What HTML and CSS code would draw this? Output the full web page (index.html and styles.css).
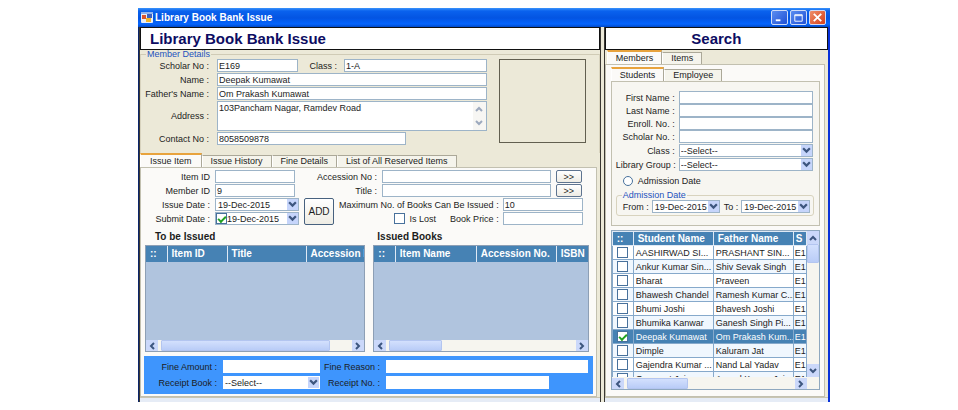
FILE: index.html
```html
<!DOCTYPE html>
<html lang="en">
<head>
<meta charset="utf-8">
<title>Library Book Bank Issue</title>
<link rel="stylesheet" href="styles.css">
</head>
<body>
<svg width="0" height="0" class="defs" aria-hidden="true">
  <symbol id="down" viewBox="0 0 8 6"><path d="M1 1l3 3 3-3" fill="none" stroke="#3d567f" stroke-width="2"/></symbol>
  <symbol id="up" viewBox="0 0 8 6"><path d="M1 5l3-3 3 3" fill="none" stroke="#3d567f" stroke-width="2"/></symbol>
  <symbol id="left" viewBox="0 0 6 8"><path d="M5 1L2 4l3 3" fill="none" stroke="#3d567f" stroke-width="2"/></symbol>
  <symbol id="right" viewBox="0 0 6 8"><path d="M1 1l3 3-3 3" fill="none" stroke="#3d567f" stroke-width="2"/></symbol>
</svg>
<div class="window">
  <header class="titlebar">
    <svg class="app-icon" viewBox="0 0 12 11"><rect width="12" height="11" rx="1" fill="#e9edf6"/><path d="M0 0h12v2H0z" fill="#8fb2ee"/><path d="M1 3h4v4H1z" fill="#d9552e"/><path d="M6 2h5v4H6z" fill="#3a62c4"/><path d="M5 6h5v4H5z" fill="#f2b62b"/></svg>
    <span class="caption">Library Book Bank Issue</span>
    <button class="win-btn" aria-label="Minimize"><svg viewBox="0 0 16 14"><path d="M4 10h5" stroke="#fff" stroke-width="2"/></svg></button>
    <button class="win-btn" aria-label="Maximize"><svg viewBox="0 0 16 14"><path d="M4 4h8v7H4zM4 5h8" fill="none" stroke="#fff"/></svg></button>
    <button class="win-btn close" aria-label="Close"><svg viewBox="0 0 16 14"><path d="M4 3l8 8M12 3l-8 8" stroke="#fff" stroke-width="2"/></svg></button>
  </header>
  <div class="columns">
    <main class="pane issue">
      <h1>Library Book Bank Issue</h1>
      <fieldset class="member">
        <legend>Member Details</legend>
        <div class="member-body">
          <div class="member-form">
            <label for="scholar">Scholar No :</label>
            <div class="pair"><input id="scholar" value="E169"><label for="class">Class :</label><input id="class" value="1-A"></div>
            <label for="name">Name :</label><input id="name" value="Deepak Kumawat">
            <label for="father">Father's Name :</label><input id="father" value="Om Prakash Kumawat">
            <label for="address">Address :</label>
            <div class="area"><textarea id="address">103Pancham Nagar, Ramdev Road</textarea><span class="spin"><svg viewBox="0 0 8 6"><use href="#up"/></svg><svg viewBox="0 0 8 6"><use href="#down"/></svg></span></div>
            <label for="contact">Contact No :</label><input id="contact" class="short" value="8058509878">
          </div>
          <div class="photo"></div>
        </div>
      </fieldset>
      <nav class="tabs main-tabs">
        <button class="tab active">Issue Item</button><button class="tab">Issue History</button><button class="tab">Fine Details</button><button class="tab">List of All Reserved Items</button>
      </nav>
      <section class="sheet issue-sheet">
        <div class="upper">
          <label for="item">Item ID</label><input id="item">
          <label for="acc">Accession No :</label><input id="acc" class="wide"><button class="go">&gt;&gt;</button>
          <label for="mid">Member ID</label><input id="mid" value="9">
          <label for="title">Title :</label><input id="title" class="wide"><button class="go">&gt;&gt;</button>
        </div>
        <div class="lower">
          <div class="dates">
            <label for="idate">Issue Date :</label>
            <span class="combo"><input id="idate" value="19-Dec-2015"><button aria-label="Pick issue date"><svg><use href="#down"/></svg></button></span>
            <label for="sdate">Submit Date :</label>
            <span class="combo"><input type="checkbox" checked aria-label="Use submit date"><input id="sdate" value="19-Dec-2015"><button aria-label="Pick submit date"><svg><use href="#down"/></svg></button></span>
          </div>
          <button class="add">ADD</button>
          <div class="limits">
            <label for="max">Maximum No. of Books Can Be Issued :</label><input id="max" value="10">
            <div class="lost"><input type="checkbox" id="lost"><label for="lost">Is Lost</label><label for="price">Book Price :</label></div><input id="price">
          </div>
        </div>
        <div class="lists">
          <section>
            <h2>To be Issued</h2>
            <div class="list">
              <table class="pending"><thead><tr><th class="mark">::</th><th class="c1">Item ID</th><th class="c2">Title</th><th>Accession N</th></tr></thead></table>
              <div class="hscroll"><button aria-label="Scroll left"><svg><use href="#left"/></svg></button><span class="track"><i class="thumb long"></i></span><button aria-label="Scroll right"><svg><use href="#right"/></svg></button></div>
            </div>
          </section>
          <section>
            <h2>Issued Books</h2>
            <div class="list">
              <table class="issued"><thead><tr><th class="mark">::</th><th class="c1">Item Name</th><th class="c2">Accession No.</th><th>ISBN</th></tr></thead></table>
              <div class="hscroll"><button aria-label="Scroll left"><svg><use href="#left"/></svg></button><span class="track"><i class="thumb"></i></span><button aria-label="Scroll right"><svg><use href="#right"/></svg></button></div>
            </div>
          </section>
        </div>
        <div class="fine">
          <label for="amount">Fine Amount :</label><input id="amount">
          <label for="reason">Fine Reason :</label><input id="reason">
          <label for="book">Receipt Book :</label>
          <span class="combo"><select id="book"><option>--Select--</option></select><svg class="arrow"><use href="#down"/></svg></span>
          <label for="receipt">Receipt No. :</label><input id="receipt" class="receipt">
        </div>
      </section>
      <div class="strip"></div>
    </main>
    <aside class="pane search">
      <h1>Search</h1>
      <nav class="tabs"><button class="tab active">Members</button><button class="tab">Items</button></nav>
      <section class="sheet search-sheet">
        <nav class="tabs"><button class="tab active">Students</button><button class="tab">Employee</button></nav>
        <div class="sheet students">
          <div class="filters">
            <label for="fn">First Name :</label><input id="fn">
            <label for="ln">Last Name :</label><input id="ln">
            <label for="en">Enroll. No. :</label><input id="en">
            <label for="sn">Scholar No. :</label><input id="sn">
          </div>
          <div class="filters picks">
            <label for="cl">Class :</label><span class="combo"><select id="cl"><option>--Select--</option></select><svg class="arrow"><use href="#down"/></svg></span>
            <label for="lg">Library Group :</label><span class="combo"><select id="lg"><option>--Select--</option></select><svg class="arrow"><use href="#down"/></svg></span>
          </div>
          <div class="by-date"><input type="radio" id="ad"><label for="ad">Admission Date</label></div>
          <fieldset class="range">
            <legend>Admission Date</legend>
            <div class="range-row">
              <label for="from">From :</label><span class="combo"><input id="from" value="19-Dec-2015"><button aria-label="Pick start date"><svg><use href="#down"/></svg></button></span>
              <label for="to">To :</label><span class="combo"><input id="to" value="19-Dec-2015"><button aria-label="Pick end date"><svg><use href="#down"/></svg></button></span>
            </div>
          </fieldset>
        </div>
        <div class="results">
          <div class="clip">
            <table class="people">
              <thead><tr><th class="mark">::</th><th class="c1">Student Name</th><th class="c2">Father Name</th><th class="c3">S</th></tr></thead>
              <tbody>
                <tr><td><input type="checkbox" aria-label="Select"></td><td>AASHIRWAD SI...</td><td>PRASHANT SIN...</td><td>E1</td></tr>
                <tr><td><input type="checkbox" aria-label="Select"></td><td>Ankur Kumar Sin...</td><td>Shiv Sevak Singh</td><td>E1</td></tr>
                <tr><td><input type="checkbox" aria-label="Select"></td><td>Bharat</td><td>Praveen</td><td>E1</td></tr>
                <tr><td><input type="checkbox" aria-label="Select"></td><td>Bhawesh Chandel</td><td>Ramesh Kumar C...</td><td>E1</td></tr>
                <tr><td><input type="checkbox" aria-label="Select"></td><td>Bhumi Joshi</td><td>Bhavesh Joshi</td><td>E1</td></tr>
                <tr><td><input type="checkbox" aria-label="Select"></td><td>Bhumika Kanwar</td><td>Ganesh Singh Pi...</td><td>E1</td></tr>
                <tr class="selected"><td><input type="checkbox" checked aria-label="Select"></td><td>Deepak Kumawat</td><td>Om Prakash Kum...</td><td>E1</td></tr>
                <tr><td><input type="checkbox" aria-label="Select"></td><td>Dimple</td><td>Kaluram Jat</td><td>E1</td></tr>
                <tr><td><input type="checkbox" aria-label="Select"></td><td>Gajendra Kumar ...</td><td>Nand Lal Yadav</td><td>E1</td></tr>
                <tr><td><input type="checkbox" aria-label="Select"></td><td>Gunwant Jain</td><td>Anand Kumar Jain</td><td>E1</td></tr>
              </tbody>
            </table>
          </div>
          <div class="vscroll"><button aria-label="Scroll up"><svg><use href="#up"/></svg></button><i class="thumb"></i><button class="end" aria-label="Scroll down"><svg><use href="#down"/></svg></button></div>
          <div class="hscroll"><button aria-label="Scroll left"><svg><use href="#left"/></svg></button><span class="track"><i class="thumb"></i></span><button aria-label="Scroll right"><svg><use href="#right"/></svg></button></div>
        </div>
      </section>
      <div class="strip"></div>
    </aside>
  </div>
</div>
</body>
</html>
```
FILE: styles.css
```css
* { box-sizing: border-box; }
body {
  margin: 0;
  padding: 8px 128px 8px 138px;
  background: #fff;
  color: #1c1c1c;
  font: 9px/12px "Liberation Sans", Arial, sans-serif;
}
.defs { position: absolute; }
input, textarea, select, button { font: inherit; color: inherit; margin: 0; padding: 0; border-radius: 0; }
input, textarea {
  width: 100%;
  min-width: 0;
  height: 13px;
  padding: 0 1px;
  border: 1px solid #9db4c8;
  background: #fff;
}
button { border: 0; background: none; }
label { text-align: right; white-space: nowrap; }
input[type="checkbox"] {
  appearance: none;
  flex: none;
  width: 11px;
  height: 11px;
  padding: 0;
  border: 1px solid #48719c;
  background: #fff;
}
input[type="checkbox"]:checked::before {
  content: "";
  display: block;
  width: 6px;
  height: 3px;
  margin: 2px 0 0 1px;
  border: solid #21a121;
  border-width: 0 0 2px 2px;
  transform: rotate(-45deg);
}
.titlebar {
  display: flex;
  align-items: center;
  gap: 2px;
  height: 19px;
  padding: 0 4px 0 3px;
  background: linear-gradient(#3a93fb 0, #0a62ee 3px, #0354e2 10px, #0565fd 16px, #0149c8 19px);
}
.app-icon { width: 12px; height: 11px; }
.caption { flex: 1; color: #fff; font-weight: bold; font-size: 10px; }
.win-btn { width: 17px; height: 15px; border: 1px solid #cfdcf8; border-radius: 2px; background: linear-gradient(135deg, #5b8df0, #1f50d6); }
.win-btn svg { display: block; width: 100%; height: 100%; }
.win-btn.close { background: linear-gradient(135deg, #ee8f6b, #d8401a); }
.columns {
  display: grid;
  grid-template-columns: minmax(0, 463fr) minmax(0, 225fr);
  gap: 3px;
  background: #ece9d8;
  border-left: 1px solid #0a246a;
  border-right: 2px solid #0831d9;
}
.pane { display: flex; flex-direction: column; border: solid #3a3834; border-width: 0 1px; }
.search { border-right: 0; }
.pane h1 {
  margin: 0;
  height: 23px;
  border: 1px solid #111;
  background: #fff;
  color: #0c0c62;
  font: bold 15px/22px "Liberation Sans", Arial, sans-serif;
}
.issue h1 { padding-left: 9px; }
.search h1 { text-align: center; }
fieldset { min-width: 0; margin: 0; padding: 0; border: 1px solid #d8d3be; }
legend { padding: 0 1px; line-height: 8px; color: #2452bd; }
.member { border-top-color: #d0cbb6; border-bottom: 0; height: 103px; }
.member legend { margin-left: 5px; }
.member-body { display: flex; gap: 12px; padding: 1px 13px 0 0; }
.member-form { flex: 1; display: grid; grid-template-columns: 68px 1fr; gap: 1px 8px; align-items: center; }
.pair { display: grid; grid-template-columns: 81px 46px 1fr; align-items: center; }
.pair label { padding-right: 7px; }
.member-form > .short { width: 70%; }
.area { position: relative; height: 30px; }
.area textarea { display: block; height: 30px; resize: none; overflow: hidden; }
.spin { position: absolute; top: 1px; right: 1px; bottom: 1px; width: 13px; display: flex; flex-direction: column; justify-content: space-around; align-items: center; background: #f0efe8; opacity: .5; }
.spin svg { width: 8px; height: 6px; }
.photo { width: 87px; height: 84px; border: 1px solid #625f50; }
.tabs { display: flex; align-items: flex-end; }
.tab {
  height: 12px;
  padding: 0 8px;
  border: 1px solid #aba898;
  border-bottom: 0;
  border-left-color: #fff;
  background: #f5f4ec;
  line-height: 11px;
  white-space: nowrap;
}
.tab.active { height: 14px; border-top: 2px solid #e8a33d; background: #fbfaf8; }
.sheet { border: 1px solid #c2c0b0; background: #fbfaf8; }
.main-tabs .active { padding: 0 9px; }
.issue-sheet { flex: 1; margin-right: 3px; padding: 2px 4px 2px; }
.upper { display: grid; grid-template-columns: 65px 80px 77px 1fr 26px; column-gap: 5px; row-gap: 1px; align-items: center; padding-right: 10px; }
.go, .add { border: 1px solid #5e7490; border-radius: 2px; background: linear-gradient(#fff, #eeece4); }
.go { height: 13px; line-height: 10px; }
.lower { display: flex; gap: 5px; padding: 1px 9px 0 0; }
.dates { display: grid; grid-template-columns: 65px 84px; gap: 1px 5px; align-items: center; }
.add { width: 37px; border-color: #47617f; font-size: 10px; }
.limits { flex: 1; display: grid; grid-template-columns: 1fr 80px; gap: 1px 4px; align-items: center; }
.lost { display: flex; align-items: center; justify-content: flex-end; gap: 5px; }
.lost label + label { margin-left: 9px; }
.combo { position: relative; display: flex; align-items: center; height: 13px; border: 1px solid #9db4c8; background: #fff; }
.combo input:not([type="checkbox"]) { flex: 1; height: 11px; border: 0; padding: 0 0 0 2px; }
.combo input[type="checkbox"] + input { padding-left: 0; }
.combo button, .arrow { flex: none; width: 11px; height: 11px; padding: 2px 1px; background: #c6d5fb; }
.combo button svg { display: block; width: 9px; height: 7px; }
.combo select { appearance: none; flex: 1; width: 100%; height: 11px; border: 0; padding: 0 1px; background: transparent; }
.arrow { pointer-events: none; }
.lists { display: grid; grid-template-columns: 220fr 215fr; gap: 8px; padding: 5px 3px 4px 0; }
h2 { margin: 0; padding-left: 10px; font-size: 10px; line-height: 14px; }
.lists section + section h2 { padding-left: 4px; }
.lists section { min-width: 0; }
h2 + .list { margin-top: 1px; }
.list { display: flex; flex-direction: column; height: 107px; border: 1px solid #8d9fb5; background: #b0c4de; overflow: hidden; }
table { width: 100%; table-layout: fixed; border-collapse: collapse; }
th { overflow: hidden; padding: 0 4px; border-left: 1px solid #dfe9f5; background: #4682b4; color: #fff; text-align: left; font-size: 10px; white-space: nowrap; }
.list th { height: 16px; }
.list th:last-child { padding-right: 0; }
th:first-child { border-left: 0; }
.mark { width: 21px; }
.pending .c1 { width: 60px; }
.pending .c2 { width: 79px; }
.issued .c1 { width: 81px; }
.issued .c2 { width: 80px; }
.hscroll { display: flex; height: 11px; margin-top: auto; background: #f6f5ef; }
.hscroll button { display: flex; align-items: center; justify-content: center; width: 12px; background: #cbd8fa; }
.hscroll button svg { width: 6px; height: 8px; }
.track { flex: 1; display: flex; }
.thumb { display: block; width: 28%; margin: 0 3px; border: 1px solid #b3c5f0; border-radius: 1px; background: linear-gradient(#d3e0fd, #b9ccf7); }
.thumb.long { width: 87%; }
.fine { display: grid; grid-template-columns: 72px 97px 58px 1fr; gap: 3px 4px; align-items: center; margin: 0 -1px; padding: 4px 5px 5px 3px; background: #3e95fd; }
.fine label { padding-right: 2px; }
.fine input, .fine .combo { border-color: #fff; }
.fine .receipt { width: 81%; }
.strip { height: 5px; background: #e6ecf6; border-top: 1px solid #c9c5b2; }
.search .tabs { padding-left: 2px; }
.search-sheet { flex: 1; display: flex; flex-direction: column; margin-right: 3px; padding: 2px 4px 2px 5px; }
.search-sheet .tabs { padding-left: 0; }
.students { padding: 9px 5px 9px 4px; background: #f7f6f1; }
.filters { display: grid; grid-template-columns: 59px 1fr; gap: 0 4px; align-items: center; padding-right: 1px; }
.picks { row-gap: 1px; padding-top: 1px; }
.by-date { display: flex; align-items: center; gap: 5px; padding: 4px 0 4px 7px; }
.by-date input { appearance: none; width: 10px; height: 10px; padding: 0; border: 1px solid #48719c; border-radius: 50%; }
.range { padding: 1px 3px 2px 4px; border-radius: 3px; }
.range legend { margin-left: 1px; }
.range-row { display: grid; grid-template-columns: 28px 1fr 15px 1fr; column-gap: 3px; align-items: center; }
.results { display: grid; grid-template: auto 12px / minmax(0, 1fr) 12px; margin-top: 4px; border: 1px solid #8fa8bf; background: #f6f5ef; }
.clip { height: 146px; overflow: hidden; }
.people td, .people th { height: 14px; padding: 0 2px; border: 1px solid #86a9cb; line-height: 12px; white-space: nowrap; overflow: hidden; }
.people th { padding: 0 4px; border-color: #dfe9f5; }
.people .c1 { width: 80px; }
.people .c2 { width: 80px; }
.people .c3 { padding: 0 2px; }
.people td:last-child { padding: 0 0 0 1px; }
.people td { background: #fff; }
.people tr:nth-child(even) td { background: #f0f7fe; }
.people td:first-child { padding-left: 4px; }
.people td input { display: block; }
.people tr.selected td { background: #4682b4; color: #fff; }
.vscroll { display: flex; flex-direction: column; }
.vscroll button { height: 13px; padding: 3px 2px; background: #cbd8fa; }
.vscroll button svg { display: block; width: 8px; height: 6px; }
.vscroll .end { margin-top: auto; }
.vscroll .thumb { width: auto; height: 19px; margin: 0; }
.results .track .thumb { width: 36%; }
```
